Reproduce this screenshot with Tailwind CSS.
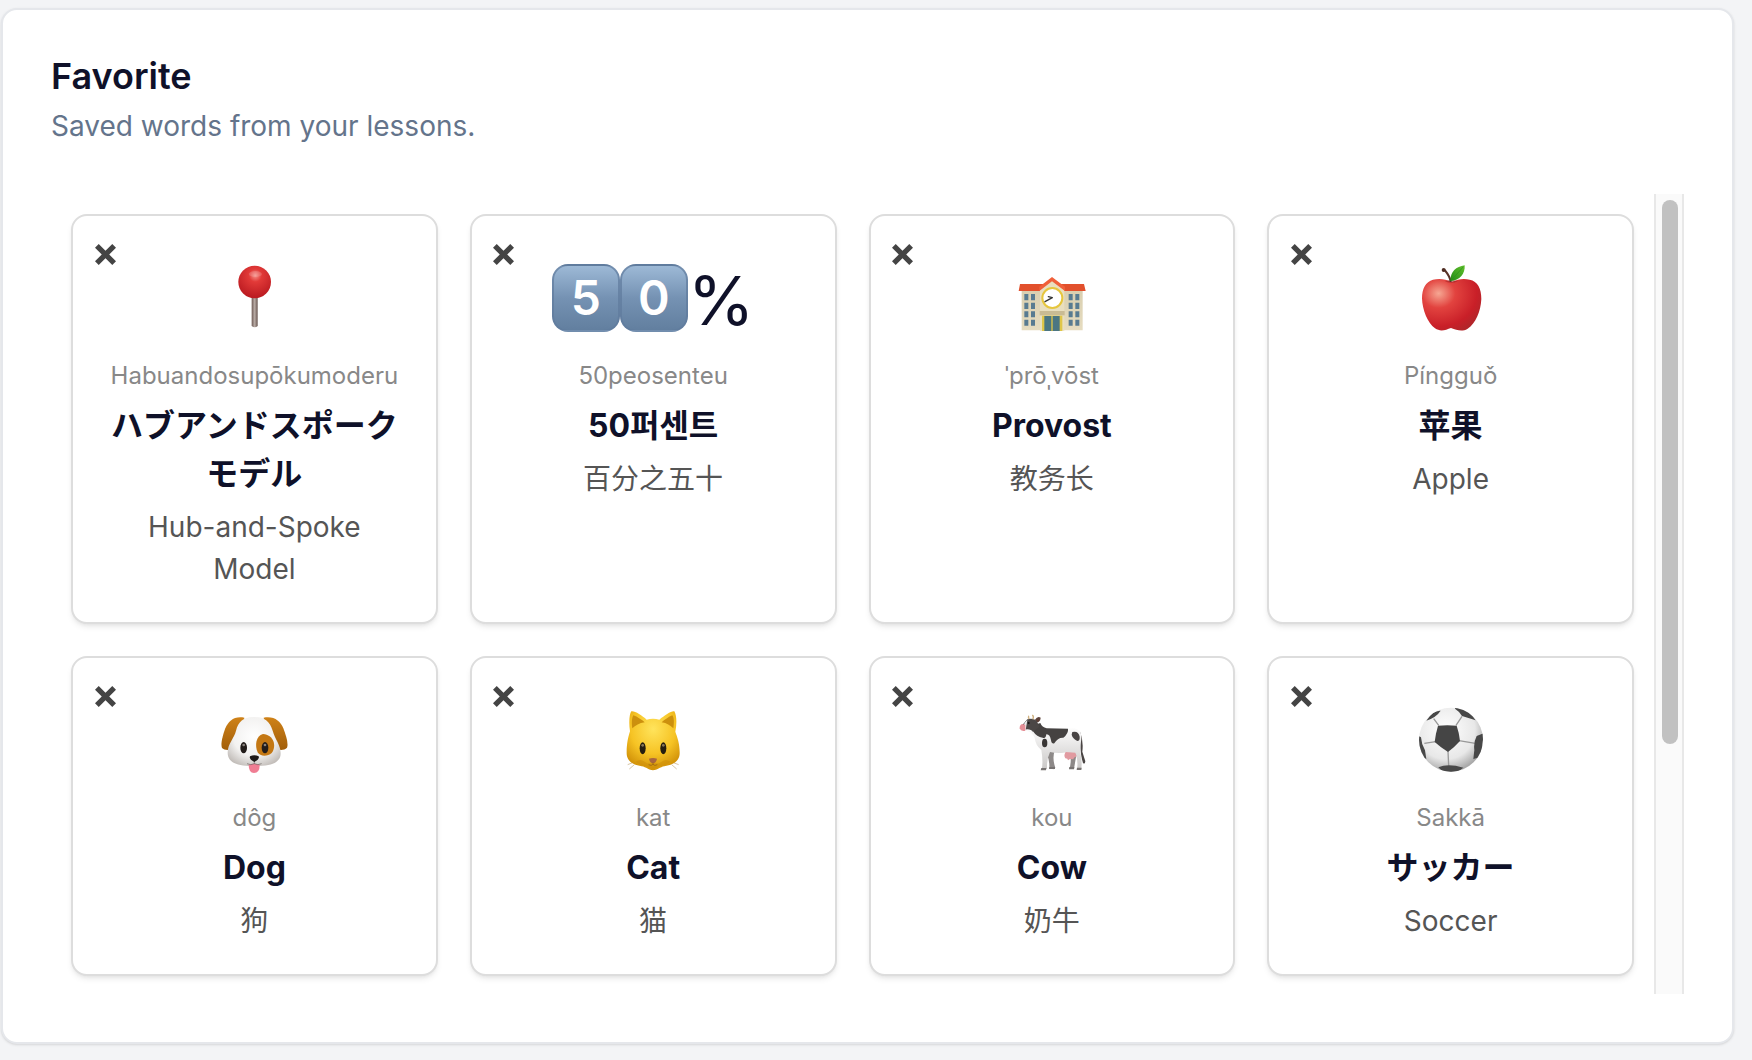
<!DOCTYPE html>
<html lang="en">
<head>
  <meta charset="UTF-8" />
  <meta name="viewport" content="width=device-width, initial-scale=1.0">
  <title>Favorite</title>
  <script src="https://cdn.jsdelivr.net/npm/@tailwindcss/browser@4"></script>
</head>
<body class="bg-[#f3f4f6] pt-2 pl-px pr-[18px] pb-4 font-['Inter','Noto_Sans_CJK_SC',sans-serif] text-[#0f1129]">
  <!-- shared close icon and gradients -->
  <svg class="absolute size-0" aria-hidden="true">
    <defs>
      <symbol id="close" viewBox="105 134 62 62">
        <path d="M105 145L116 134L136 154L156 134L167 145L147 165L167 185L156 196L136 176L116 196L105 185L125 165Z" fill="#444"/>
      </symbol>
      <radialGradient id="red-ball" cx=".52" cy=".3" r=".65"><stop offset="0" stop-color="#f5918a"/><stop offset=".3" stop-color="#e23a38"/><stop offset="1" stop-color="#bd1c22"/></radialGradient>
      <linearGradient id="needle"><stop offset="0" stop-color="#6d5a54"/><stop offset=".5" stop-color="#b9aca6"/><stop offset="1" stop-color="#65524c"/></linearGradient>
      <linearGradient id="wall" x2="0" y2="1"><stop offset="0" stop-color="#d9cfb0"/><stop offset="1" stop-color="#e6dcc0"/></linearGradient>
      <radialGradient id="apple" cx=".28" cy=".28" r=".8"><stop offset="0" stop-color="#f6a793"/><stop offset=".35" stop-color="#e2433f"/><stop offset=".8" stop-color="#c91f28"/><stop offset="1" stop-color="#b3252a"/></radialGradient>
      <linearGradient id="leaf" x1="1" x2="0" y2="1"><stop offset="0" stop-color="#62c02c"/><stop offset="1" stop-color="#228c16"/></linearGradient>
      <radialGradient id="fur" cx=".5" cy=".4" r=".65"><stop offset="0" stop-color="#fff"/><stop offset=".6" stop-color="#f3f2f1"/><stop offset="1" stop-color="#c2bdb9"/></radialGradient>
      <linearGradient id="ear" x2="0" y2="1"><stop offset="0" stop-color="#cf8218"/><stop offset="1" stop-color="#a25e09"/></linearGradient>
      <radialGradient id="cat" cx=".5" cy=".3" r=".7"><stop offset="0" stop-color="#ffe45c"/><stop offset=".6" stop-color="#f6c324"/><stop offset="1" stop-color="#d19108"/></radialGradient>
      <linearGradient id="cow" x2="0" y2="1"><stop offset="0" stop-color="#fff"/><stop offset="1" stop-color="#c9c7c6"/></linearGradient>
      <radialGradient id="ball" cx=".42" cy=".35" r=".65"><stop offset="0" stop-color="#fff"/><stop offset=".7" stop-color="#e8e8e8"/><stop offset="1" stop-color="#a9a9a9"/></radialGradient>
      <clipPath id="ball-clip"><circle cx="152" cy="149" r="96"/></clipPath>
    </defs>
  </svg>

  <main class="rounded-2xl border-2 border-[#e5e7eb] bg-white p-12 shadow-sm">
    <header class="mb-12">
      <h1 class="text-[36px] leading-9 font-semibold">Favorite</h1>
      <p class="mt-3 text-[28px] leading-10 text-[#64748b]">Saved words from your lessons.</p>
    </header>

    <section class="flex h-[800px]" aria-label="Saved words">
      <div class="grid min-w-0 flex-1 grid-cols-4 content-start gap-8 overflow-hidden p-5">

        <article class="relative rounded-2xl border-2 border-[#dddddd] bg-white p-8 text-center shadow-md shadow-black/8">
          <button class="absolute top-6.5 left-5 grid size-6 place-items-center" aria-label="Remove"><svg class="size-[21px]"><use href="#close"/></svg></button>
          <div class="mb-3.5 flex h-24 items-center justify-center pt-1">
            <svg class="size-[68px]" viewBox="481 192 204 204">
              <path d="M576 290h18v88q-9 8-18 0z" fill="url(#needle)"/>
              <circle cx="585" cy="246" r="49" fill="url(#red-ball)"/>
              <ellipse cx="587" cy="222" rx="20" ry="9" fill="#fff" opacity=".15"/>
            </svg>
          </div>
          <p class="mb-2 text-[24px] leading-9 text-[#888]">Habuandosupōkumoderu</p>
          <h2 class="mb-2 text-[32px] leading-12 font-bold font-['Inter','Noto_Sans_CJK_JP',sans-serif]" lang="ja">ハブアンドスポークモデル</h2>
          <p class="text-[28px] leading-[42px] text-[#555]">Hub-and-Spoke Model</p>
        </article>

        <article class="relative rounded-2xl border-2 border-[#dddddd] bg-white p-8 text-center shadow-md shadow-black/8">
          <button class="absolute top-6.5 left-5 grid size-6 place-items-center" aria-label="Remove"><svg class="size-[21px]"><use href="#close"/></svg></button>
          <div class="mb-3.5 flex h-24 items-center justify-center pt-1">
            <span class="grid size-[68px] place-items-center rounded-2xl border-2 border-[#5f7b9c]/70 bg-linear-to-b from-[#9db9d6] via-[#7592b3] to-[#627f9f] text-[48px] leading-none font-semibold text-white">5</span>
            <span class="grid size-[68px] place-items-center rounded-2xl border-2 border-[#5f7b9c]/70 bg-linear-to-b from-[#9db9d6] via-[#7592b3] to-[#627f9f] text-[48px] leading-none font-semibold text-white">0</span>
            <span class="pt-1 text-[68px] leading-none">%</span>
          </div>
          <p class="mb-2 text-[24px] leading-9 text-[#888]">50peosenteu</p>
          <h2 class="mb-2 text-[32px] leading-12 font-bold font-['Inter','Noto_Sans_CJK_KR',sans-serif]" lang="ko">50퍼센트</h2>
          <p class="text-[28px] leading-[42px] text-[#555]" lang="zh">百分之五十</p>
        </article>

        <article class="relative rounded-2xl border-2 border-[#dddddd] bg-white p-8 text-center shadow-md shadow-black/8">
          <button class="absolute top-6.5 left-5 grid size-6 place-items-center" aria-label="Remove"><svg class="size-[21px]"><use href="#close"/></svg></button>
          <div class="mb-3.5 flex h-24 items-center justify-center pt-1">
            <svg class="size-[68px]" viewBox="114 42 204 204">
              <path d="M125 120h183v121H125z" fill="url(#wall)"/>
              <path d="M120 102h70v21h-74zM242 102h70l5 21h-75z" fill="#e2502c"/>
              <path d="M180 120l37-31 36 31v122h-73z" fill="#e9dfbf"/>
              <path d="M178 123v-13l38-29 39 29v13l-39-29z" fill="#f0603a"/>
              <circle cx="217" cy="144" r="30" fill="#fff" stroke="#e6c63d" stroke-width="6"/>
              <path d="M217 143l-22 12M217 143l-12-3" stroke="#333" stroke-width="4" stroke-linecap="round"/>
              <path d="M179 183h75v13h-75z" fill="#c9bb94"/>
              <path d="M186 197h61v46h-61z" fill="#dfc648"/>
              <path d="M193 198h21v45h-21zM218 198h21v45h-21z" fill="#4b7682"/>
              <g fill="#587b91">
                <path d="M133 132h12v19h-12zM153 132h12v19h-12zM133 158h12v19h-12zM153 158h12v19h-12zM133 184h12v18h-12zM153 184h12v18h-12zM133 209h12v18h-12zM153 209h12v18h-12z"/>
                <path d="M266 132h12v19h-12zM286 132h12v19h-12zM266 158h12v19h-12zM286 158h12v19h-12zM266 184h12v18h-12zM286 184h12v18h-12zM266 209h12v18h-12zM286 209h12v18h-12z"/>
              </g>
            </svg>
          </div>
          <p class="mb-2 text-[24px] leading-9 text-[#888]">ˈprōˌvōst</p>
          <h2 class="mb-2 text-[32px] leading-12 font-bold">Provost</h2>
          <p class="text-[28px] leading-[42px] text-[#555]" lang="zh">教务长</p>
        </article>

        <article class="relative rounded-2xl border-2 border-[#dddddd] bg-white p-8 text-center shadow-md shadow-black/8">
          <button class="absolute top-6.5 left-5 grid size-6 place-items-center" aria-label="Remove"><svg class="size-[21px]"><use href="#close"/></svg></button>
          <div class="mb-3.5 flex h-24 items-center justify-center pt-1">
            <svg class="size-[68px]" viewBox="80 42 204 204">
              <path d="M184 96C165 86 145 85 128 89C106 95 95 116 95 145C96 180 112 219 134 235C150 246 166 240 182 234C200 240 214 247 232 236C256 220 271 185 273 147C273 115 262 94 238 89C220 85 203 87 184 96Z" fill="url(#apple)"/>
              <path d="M164 94q18-9 38 0q-18 9-38 0z" fill="#8e1a20" opacity=".45"/>
              <path d="M181 96C180 82 172 71 163 60" fill="none" stroke="#5a3328" stroke-width="6"/>
              <circle cx="160" cy="60" r="6" fill="#4e2c22"/>
              <path d="M180 93C180 65 197 50 223 46C225 70 209 93 180 93Z" fill="url(#leaf)"/>
              <path d="M182 91Q198 75 219 50" fill="none" stroke="#2b8f1c" stroke-width="2"/>
            </svg>
          </div>
          <p class="mb-2 text-[24px] leading-9 text-[#888]">Píngguǒ</p>
          <h2 class="mb-2 text-[32px] leading-12 font-bold" lang="zh">苹果</h2>
          <p class="text-[28px] leading-[42px] text-[#555]">Apple</p>
        </article>

        <article class="relative rounded-2xl border-2 border-[#dddddd] bg-white p-8 text-center shadow-md shadow-black/8">
          <button class="absolute top-6.5 left-5 grid size-6 place-items-center" aria-label="Remove"><svg class="size-[21px]"><use href="#close"/></svg></button>
          <div class="mb-3.5 flex h-24 items-center justify-center pt-1">
            <svg class="size-[68px]" viewBox="61 48 204 204">
              <path d="M134 83C104 77 86 93 77 115C69 137 62 162 67 174C74 181 90 182 98 175L130 110Z" fill="url(#ear)"/>
              <path d="M192 83C223 77 242 93 251 115C259 137 267 160 262 173C254 181 238 182 230 175L196 110Z" fill="url(#ear)"/>
              <path d="M164 81C132 80 116 95 109 122C104 145 84 160 84 188C84 217 112 229 163 228C214 229 243 219 243 190C243 164 226 148 219 122C211 95 196 81 164 81Z" fill="url(#fur)"/>
              <path d="M190 132C168 138 165 168 174 187C181 200 204 200 216 189C232 168 222 134 190 132Z" fill="#c47814"/>
              <ellipse cx="132" cy="173" rx="10" ry="17" fill="#221c1a"/><ellipse cx="196" cy="173" rx="10" ry="17" fill="#221c1a"/>
              <ellipse cx="132" cy="165" rx="4" ry="4" fill="#88817c"/><ellipse cx="196" cy="165" rx="4" ry="4" fill="#88817c"/>
              <path d="M147 224q17-6 33 0q1 24-17 25q-16-1-16-25z" fill="#f07d93"/>
              <path d="M164 213v9M142 221q12 6 22 0q10 6 22 0" fill="none" stroke="#6b6360" stroke-width="2"/>
              <path d="M151 199q13-6 26 0q3 9-13 17q-16-8-13-17z" fill="#1f1a19"/>
            </svg>
          </div>
          <p class="mb-2 text-[24px] leading-9 text-[#888]">dôg</p>
          <h2 class="mb-2 text-[32px] leading-12 font-bold">Dog</h2>
          <p class="text-[28px] leading-[42px] text-[#555]" lang="zh">狗</p>
        </article>

        <article class="relative rounded-2xl border-2 border-[#dddddd] bg-white p-8 text-center shadow-md shadow-black/8">
          <button class="absolute top-6.5 left-5 grid size-6 place-items-center" aria-label="Remove"><svg class="size-[21px]"><use href="#close"/></svg></button>
          <div class="mb-3.5 flex h-24 items-center justify-center pt-1">
            <svg class="size-[68px]" viewBox="57 48 204 204">
              <path d="M98 218l-15 6M103 224l-15 13M220 218l16 6M215 224l15 13" stroke="#c2a878" stroke-width="2"/>
              <path d="M90 124C86 98 88 72 94 64C104 62 126 76 140 89Q159 83 178 89C194 76 214 62 223 64C230 76 231 101 226 125C232 142 239 160 239 187C240 212 221 224 193 229C181 231 170 241 159 241C148 241 138 231 125 229C98 224 79 213 80 187C80 160 85 140 90 124Z" fill="url(#cat)"/>
              <path d="M97 115C94 98 96 82 100 76C112 80 126 90 134 97C118 99 106 106 97 115Z" fill="#cc900e"/>
              <path d="M220 115C223 98 222 82 217 76C206 80 193 90 185 97C200 99 211 106 220 115Z" fill="#cc900e"/>
              <path d="M108 215q12-10 26 0q12 10 25 2q13 8 26-2q12-10 26 0q-14 13-32 13q-12 7-20 8q-10-1-20-8q-18 0-31-13z" fill="#c98a07" opacity=".45"/>
              <ellipse cx="128" cy="175" rx="9" ry="18" fill="#251e10"/><ellipse cx="190" cy="175" rx="9" ry="18" fill="#251e10"/>
              <circle cx="128" cy="166" r="4" fill="#88785a"/><circle cx="190" cy="166" r="4" fill="#88785a"/>
              <path d="M147 206q12-4 24 0q-2 12-12 14q-10-2-12-14z" fill="#a8653f"/>
              <path d="M159 218v5M146 224q8 5 13-1q5 6 13 1" fill="none" stroke="#8c5c12" stroke-width="2"/>
            </svg>
          </div>
          <p class="mb-2 text-[24px] leading-9 text-[#888]">kat</p>
          <h2 class="mb-2 text-[32px] leading-12 font-bold">Cat</h2>
          <p class="text-[28px] leading-[42px] text-[#555]" lang="zh">猫</p>
        </article>

        <article class="relative rounded-2xl border-2 border-[#dddddd] bg-white p-8 text-center shadow-md shadow-black/8">
          <button class="absolute top-6.5 left-5 grid size-6 place-items-center" aria-label="Remove"><svg class="size-[21px]"><use href="#close"/></svg></button>
          <div class="mb-3.5 flex h-24 items-center justify-center pt-1">
            <svg class="size-[68px]" viewBox="54 48 204 204">
              <path d="M240 125Q251 150 247 185L256 214Q255 224 249 219Q240 190 241 150Z" fill="#4a4544"/>
              <path d="M143 180L164 182Q156 205 166 233L160 238L148 234Q149 210 141 195ZM209 185L230 190L222 236L208 237Q216 212 209 185Z" fill="#8d8988"/>
              <path d="M78 112L116 108Q130 116 150 116L225 115Q246 122 244 147Q240 172 241 190Q247 210 244 238L231 239Q235 213 227 193Q200 185 185 189Q165 190 150 186Q140 207 141 236L125 240Q130 215 124 180Q106 165 104 143Q95 124 78 122Z" fill="url(#cow)"/>
              <path d="M197 186Q190 196 196 205L202 206L204 211L210 207L220 208L222 203L230 199L226 188Z" fill="#e19aa0"/>
              <path d="M99 106L121 99Q126 112 140 115L204 116Q206 130 190 143Q173 142 163 160Q155 163 153 151Q150 132 139 133Q137 148 128 143Q110 140 100 125Z" fill="#454241"/>
              <ellipse cx="134" cy="159" rx="8" ry="13" fill="#383534"/>
              <path d="M217 126Q235 121 239 140Q240 153 232 153Q218 146 215 134Z" fill="#484444"/>
              <path d="M105 89Q113 77 122 83Q121 97 109 97Z" fill="#5c4038"/>
              <path d="M82 88Q98 83 110 92L118 110L99 126Q92 114 71 119L67 105Z" fill="#4b4746"/>
              <path d="M74 98L82 90L77 120L68 118Z" fill="#eee"/>
              <path d="M66 102Q58 106 59 115Q62 125 76 122L76 104Z" fill="#e58f97"/>
              <path d="M88 87Q84 82 86 77M98 88Q103 80 97 75" fill="none" stroke="#cfb181" stroke-width="4"/>
              <circle cx="86" cy="99" r="3" fill="#151313"/>
              <path d="M124 234h15l-1 7h-16zM148 231h17v6h-18zM208 231h15l-1 7h-15zM231 233h14l-1 7h-14z" fill="#777372"/>
            </svg>
          </div>
          <p class="mb-2 text-[24px] leading-9 text-[#888]">kou</p>
          <h2 class="mb-2 text-[32px] leading-12 font-bold">Cow</h2>
          <p class="text-[28px] leading-[42px] text-[#555]" lang="zh">奶牛</p>
        </article>

        <article class="relative rounded-2xl border-2 border-[#dddddd] bg-white p-8 text-center shadow-md shadow-black/8">
          <button class="absolute top-6.5 left-5 grid size-6 place-items-center" aria-label="Remove"><svg class="size-[21px]"><use href="#close"/></svg></button>
          <div class="mb-3.5 flex h-24 items-center justify-center pt-1">
            <svg class="size-[68px]" viewBox="50 48 204 204">
              <circle cx="152" cy="149" r="96" fill="url(#ball)"/>
              <g clip-path="url(#ball-clip)">
                <path d="M115 106L100 86M167 106L185 79M176 152L225 160M143 184L145 227M106 155L72 160" stroke="#999" stroke-width="4"/>
                <path d="M113 107Q141 104 169 107Q177 130 179 153Q163 171 143 186Q122 173 103 156Q106 130 113 107Z" fill="#454545"/>
                <path d="M78 92Q98 60 121 62Q108 82 78 92ZM164 50Q204 57 226 91L185 78Q177 64 164 56ZM250 130L229 138Q219 157 222 180L219 207L242 200ZM52 136L62 142Q63 161 74 181L78 207L54 195ZM114 232Q143 219 189 233L166 250H132Z" fill="#484848"/>
              </g>
            </svg>
          </div>
          <p class="mb-2 text-[24px] leading-9 text-[#888]">Sakkā</p>
          <h2 class="mb-2 text-[32px] leading-12 font-bold font-['Inter','Noto_Sans_CJK_JP',sans-serif]" lang="ja">サッカー</h2>
          <p class="text-[28px] leading-[42px] text-[#555]">Soccer</p>
        </article>

      </div>

      <!-- scrollbar track and thumb -->
      <div class="w-[30px] shrink-0 border-x-2 border-[#e8e8e8] bg-[#fafafa] px-1.5 py-1.5">
        <div class="h-[69%] w-4 rounded-full bg-[#c1c1c1]"></div>
      </div>
    </section>
  </main>
</body>
</html>
